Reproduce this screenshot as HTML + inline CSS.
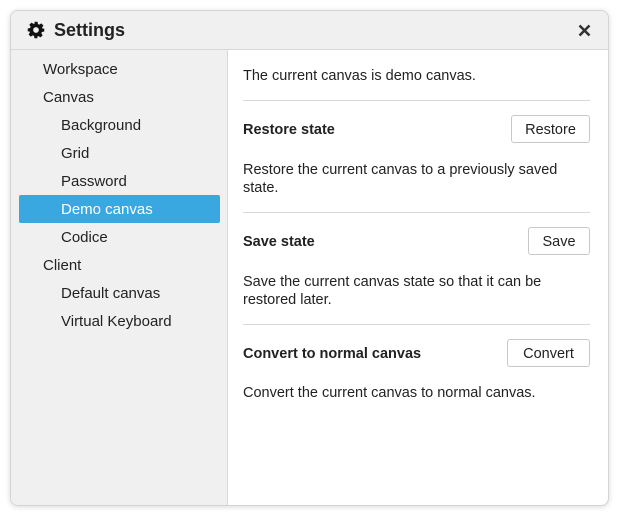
<!DOCTYPE html>
<html><head><style>
body{margin:0;width:618px;height:514px;background:#fff;font-family:"Liberation Sans",sans-serif;position:relative;overflow:hidden}
.dlg{position:absolute;left:10px;top:10px;width:597px;height:494px;border:1px solid #d4d4d4;border-radius:8px;box-shadow:0 1px 6px rgba(0,0,0,.15);overflow:hidden;background:#fff}
.hdr{position:absolute;left:0;top:0;right:0;height:38px;background:#f0f0f0;border-bottom:1px solid #d8d8d8}
.title{position:absolute;left:43px;top:9px;font-size:18px;font-weight:bold;color:#222}
.side{position:absolute;left:0;top:39px;width:216px;bottom:0;background:#f0f0f0;border-right:1px solid #d8d8d8}
.it{position:absolute;font-size:15px;color:#222;height:28px;line-height:30px}
.sel{position:absolute;left:8px;top:145px;width:201px;height:28px;background:#3aa8e0;border-radius:2px}
.t{position:absolute;left:232px;font-size:14.5px;color:#222}
.b{font-weight:bold}
.hr{position:absolute;left:232px;width:347px;height:1px;background:#d8d8d8}
.btn{position:absolute;height:26px;border:1px solid #c8c8c8;border-radius:3px;background:#fff;font-size:14.5px;line-height:28px;text-align:center;color:#222}
</style></head><body>
<div class="dlg">
<div class="hdr">
<svg style="position:absolute;left:16px;top:10px" width="18" height="18" viewBox="0 0 24 24"><path fill="#111" d="M10 1h4l.6 3.1 1.8.8 2.6-1.8 2.9 2.9-1.8 2.6.8 1.8L23 10v4l-3.1.6-.8 1.8 1.8 2.6-2.9 2.9-2.6-1.8-1.8.8L14 23h-4l-.6-3.1-1.8-.8-2.6 1.8-2.9-2.9 1.8-2.6-.8-1.8L1 14v-4l3.1-.6.8-1.8-1.8-2.6 2.9-2.9 2.6 1.8 1.8-.8z M12 8.2a3.8 3.8 0 1 0 0 7.6a3.8 3.8 0 1 0 0-7.6z" fill-rule="evenodd"/></svg>
<div class="title">Settings</div>
<svg style="position:absolute;left:567px;top:13px" width="13" height="13" viewBox="0 0 13 13"><path d="M1.5 1.5l10 10M11.5 1.5l-10 10" stroke="#333" stroke-width="2.6"/></svg>
</div>
<div class="side">
<div class="sel"></div>
<div class="it" style="left:32px;top:5px">Workspace</div>
<div class="it" style="left:32px;top:33px">Canvas</div>
<div class="it" style="left:50px;top:61px">Background</div>
<div class="it" style="left:50px;top:89px">Grid</div>
<div class="it" style="left:50px;top:117px">Password</div>
<div class="it" style="left:50px;top:145px;color:#fff">Demo canvas</div>
<div class="it" style="left:50px;top:173px">Codice</div>
<div class="it" style="left:32px;top:201px">Client</div>
<div class="it" style="left:50px;top:229px">Default canvas</div>
<div class="it" style="left:50px;top:257px">Virtual Keyboard</div>
</div>
<div class="t" style="top:57px">The current canvas is demo canvas.</div>
<div class="hr" style="top:89px"></div>
<div class="t b" style="top:111px">Restore state</div>
<div class="btn" style="left:500px;top:104px;width:77px">Restore</div>
<div class="t" style="top:150px;line-height:18px;width:340px">Restore the current canvas to a previously saved state.</div>
<div class="hr" style="top:201px"></div>
<div class="t b" style="top:223px">Save state</div>
<div class="btn" style="left:517px;top:216px;width:60px">Save</div>
<div class="t" style="top:262px;line-height:18px;width:340px">Save the current canvas state so that it can be restored later.</div>
<div class="hr" style="top:313px"></div>
<div class="t b" style="top:335px">Convert to normal canvas</div>
<div class="btn" style="left:496px;top:328px;width:81px">Convert</div>
<div class="t" style="top:374px">Convert the current canvas to normal canvas.</div>
</div>
</body></html>
